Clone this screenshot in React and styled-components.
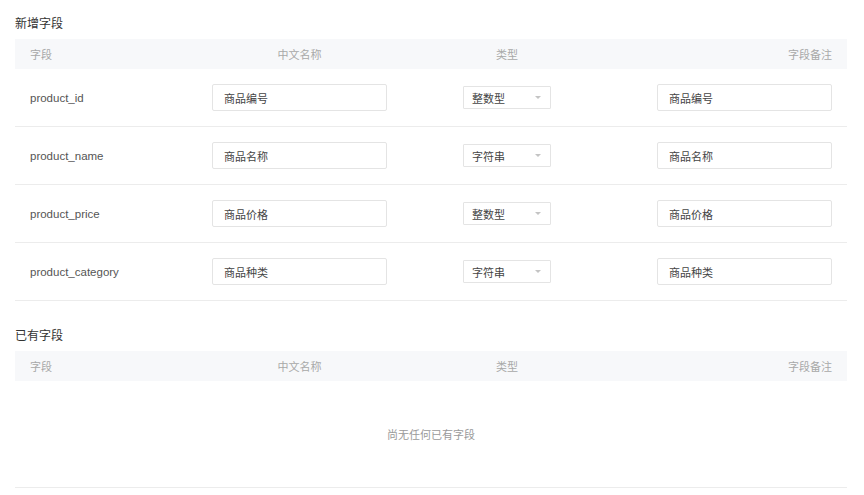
import React from 'react';
import styled, { createGlobalStyle } from 'styled-components';

const GlobalStyle = createGlobalStyle`
	html, body {
		margin: 0;
		padding: 0;
		background: #fff;
	}
	body {
		font-family: "Liberation Sans", "Noto Sans CJK SC", sans-serif;
		color: #333;
	}
`;

const Page = styled.div`
	width: 832px;
	padding: 0 17px 0 15px;
`;

const Section = styled.section`
	margin-top: ${(p) => (p.$first ? '0' : '11px')};
`;

const SectionTitle = styled.h3`
	margin: 0;
	padding: 15px 0 6px;
	font-size: 12px;
	line-height: 18px;
	font-weight: normal;
	color: #333;
`;

const Grid = styled.div`
	display: grid;
	grid-template-columns: 182px 205px 210px 235px;
	align-items: center;
`;

const HeadRow = styled(Grid)`
	height: 30px;
	background: #f7f8fa;
`;

const HeadCell = styled.div`
	font-size: 11px;
	color: #a8a8a8;
	text-align: ${(p) => p.$align || 'left'};
	padding: ${(p) =>
		p.$align === 'right' ? '0 15px 0 0' : p.$align === 'center' ? '0' : '0 0 0 15px'};
`;

const Row = styled(Grid)`
	height: 57px;
	border-bottom: 1px solid #ececec;
`;

const Cell = styled.div`
	display: flex;
	align-items: center;
	justify-content: ${(p) =>
		p.$align === 'right' ? 'flex-end' : p.$align === 'center' ? 'center' : 'flex-start'};
	padding: ${(p) => (p.$align === 'right' ? '0 15px 0 0' : p.$align === 'center' ? '0' : '0 0 0 15px')};
`;

const FieldName = styled.span`
	font-family: "Liberation Sans", sans-serif;
	font-size: 11.5px;
	color: #555;
`;

const TextInput = styled.input`
	box-sizing: border-box;
	width: 175px;
	height: 27px;
	padding: 0 11px;
	border: 1px solid #e4e4e4;
	border-radius: 2px;
	background: #fff;
	font-family: "Noto Sans CJK SC", sans-serif;
	font-size: 11px;
	color: #444;
	outline: none;
`;

const SelectBox = styled.div`
	box-sizing: border-box;
	width: 88px;
	height: 23px;
	padding: 0 9px 0 8px;
	border: 1px solid #e4e4e4;
	border-radius: 1px;
	display: flex;
	align-items: center;
	justify-content: space-between;
	font-family: "Noto Sans CJK SC", sans-serif;
	font-size: 11px;
	color: #444;
	cursor: pointer;
`;

const Caret = styled.span`
	width: 0;
	height: 0;
	border-left: 3px solid transparent;
	border-right: 3px solid transparent;
	border-top: 3px solid #c4c4c4;
`;

const Empty = styled.div`
	height: 106px;
	display: flex;
	align-items: center;
	justify-content: center;
	font-family: "Noto Sans CJK SC", sans-serif;
	font-size: 11px;
	color: #9a9a9a;
	border-bottom: 1px solid #ececec;
`;

const fields = [
	{ name: 'product_id', label: '商品编号', type: '整数型', note: '商品编号' },
	{ name: 'product_name', label: '商品名称', type: '字符串', note: '商品名称' },
	{ name: 'product_price', label: '商品价格', type: '整数型', note: '商品价格' },
	{ name: 'product_category', label: '商品种类', type: '字符串', note: '商品种类' },
];

function TableHead() {
	return (
		<HeadRow>
			<HeadCell>字段</HeadCell>
			<HeadCell $align="center">中文名称</HeadCell>
			<HeadCell $align="center">类型</HeadCell>
			<HeadCell $align="right">字段备注</HeadCell>
		</HeadRow>
	);
}

export default function App() {
	return (
		<Page>
			<GlobalStyle />
			{/* new fields */}
			<Section $first>
				<SectionTitle>新增字段</SectionTitle>
				<TableHead />
				{fields.map((f) => (
					<Row key={f.name}>
						<Cell>
							<FieldName>{f.name}</FieldName>
						</Cell>
						<Cell $align="center">
							<TextInput defaultValue={f.label} />
						</Cell>
						<Cell $align="center">
							<SelectBox>
								<span>{f.type}</span>
								<Caret />
							</SelectBox>
						</Cell>
						<Cell $align="right">
							<TextInput defaultValue={f.note} />
						</Cell>
					</Row>
				))}
			</Section>
			{/* existing fields */}
			<Section>
				<SectionTitle>已有字段</SectionTitle>
				<TableHead />
				<Empty>尚无任何已有字段</Empty>
			</Section>
		</Page>
	);
}
